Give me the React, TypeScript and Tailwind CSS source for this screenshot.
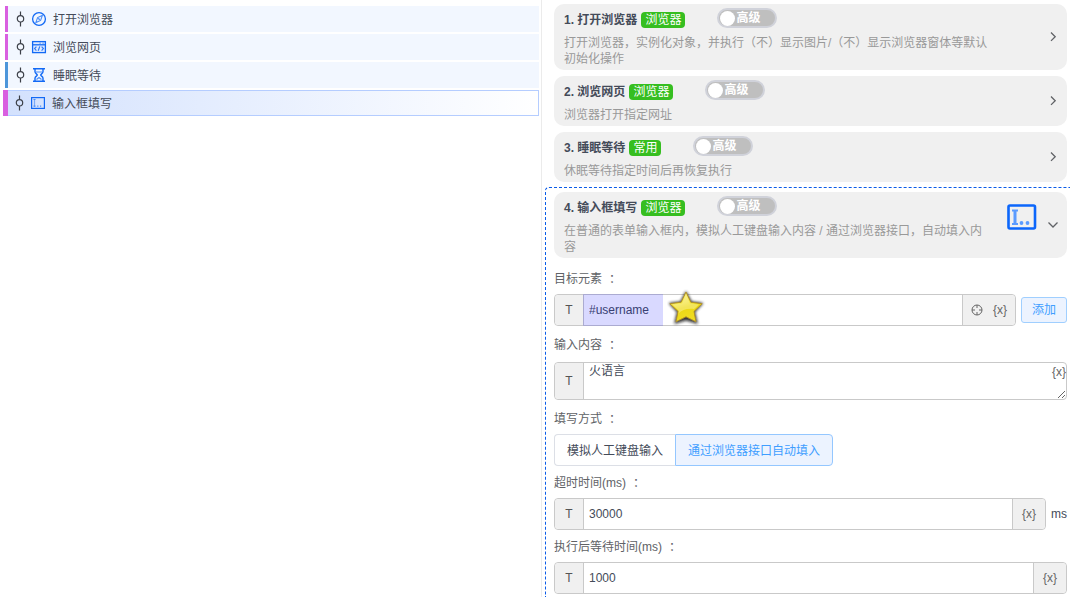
import React from "react";

type StepIcon = "compass" | "page" | "hourglass" | "input";

const steps: { label: string; icon: StepIcon; accent: string; selected?: boolean }[] = [
  { label: "打开浏览器", icon: "compass", accent: "border-[#d95fe0]" },
  { label: "浏览网页", icon: "page", accent: "border-[#d95fe0]" },
  { label: "睡眠等待", icon: "hourglass", accent: "border-[#4d96da]" },
  { label: "输入框填写", icon: "input", accent: "border-[#d95fe0]", selected: true },
];

function NodeMark() {
  return (
    <svg className="h-4 w-2.5 shrink-0" viewBox="0 0 10 16" fill="none" stroke="#3c4048" strokeWidth="1.2">
      <path d="M5.5 .5v4M5.5 11v4.5" />
      <circle cx="5.5" cy="7.8" r="3.2" />
    </svg>
  );
}

function Glyph({ name }: { name: StepIcon }) {
  return (
    <svg className="size-4 shrink-0" viewBox="0 0 16 16" fill="none" stroke="#1269f5" strokeWidth="1.3">
      {name === "compass" && (
        <>
          <circle cx="8" cy="8" r="6.4" />
          <path d="M11.4 4.4 9.6 9.4 4.8 11.6l1.8-5z" stroke="#4a8df8" strokeWidth="1.1" />
          <path d="m7.2 7.2 1.6 1.6" stroke="#4a8df8" />
        </>
      )}
      {name === "page" && (
        <>
          <rect x="1.6" y="2.6" width="12.8" height="11" fill="#dfeaff" />
          <path d="M1.6 5.8h12.8" />
          <path d="M8.5 4.2h1.2M11.5 4.2h1.2" stroke="#4a8df8" />
          <path d="M5.4 7.6 3.6 9.6l1.8 2M10.6 7.6l1.8 2-1.8 2M8.8 7.4l-1.6 4.4" stroke="#2f7bf7" strokeWidth="1.2" />
        </>
      )}
      {name === "hourglass" && (
        <>
          <path d="M2 1.7h12M2 14.3h12" strokeWidth="1.5" />
          <path d="M4 2v2.800C4 6.5 6.300 7 6.300 8S4 9.500 4 11.200V14M12 2v2.800C12 6.500 9.700 7 9.700 8s2.300 1.500 2.300 3.200V14" strokeWidth="1.4" />
          <path d="M5 5h6" stroke="#4a8df8" strokeWidth="1" />
          <path d="m5.500 12.500 2.500-2 2.500 2" stroke="#4a8df8" strokeWidth="1.2" />
        </>
      )}
      {name === "input" && (
        <>
          <rect x="1.6" y="2.6" width="12.8" height="10.8" strokeWidth="1.2" />
          <path d="M4.500 4.500v7" stroke="#7aabf9" strokeWidth="1.2" />
          <path d="M3.500 4.500h2M3.500 11.200h2M7.200 11.200h1.200M10 11.200h1.200" stroke="#4a8df8" strokeWidth="1.2" />
        </>
      )}
    </svg>
  );
}

function InputBoxIcon() {
  return (
    <svg className="mb-4 h-[26px] w-[30px] shrink-0" viewBox="0 0 30 26" fill="none">
      <rect x="1.5" y="1.5" width="26.5" height="23" rx="1.5" stroke="#0b66fb" strokeWidth="2.6" />
      <path d="M5 6.500h6M5 20h6" stroke="#5b9bff" strokeWidth="2" />
      <path d="M8 6v14" stroke="#5b9bff" strokeWidth="3" />
      <circle cx="14.5" cy="19" r="1.9" fill="#5b9bff" />
      <circle cx="20.500" cy="19" r="1.9" fill="#5b9bff" />
    </svg>
  );
}

function Star() {
  return (
    <svg className="h-10 w-10" viewBox="0 0 40 40">
      <defs>
        <linearGradient id="starFill" x1="0" y1="0" x2="0.3" y2="1">
          <stop offset="0" stopColor="#f8f08a" />
          <stop offset="0.45" stopColor="#f2e23a" />
          <stop offset="0.6" stopColor="#ecd814" />
          <stop offset="1" stopColor="#efdc22" />
        </linearGradient>
        <filter id="starShade" x="-30%" y="-30%" width="160%" height="160%">
          <feGaussianBlur stdDeviation="1.8" />
        </filter>
      </defs>
      <path d="M19 2l5.500 10.500 12 1.500-8.500 9 2.800 12L19 31.500 7.200 35l2.800-12L1.500 14l12-1.500z" fill="#111" opacity="0.85" filter="url(#starShade)" />
      <path d="M19 3l4.900 10.200 11.300 1.500-8.200 7.700 2 10.400-10-5-10 5 2-10.400-8.200-7.700 11.300-1.500z" fill="url(#starFill)" stroke="#b0902a" strokeWidth="1" strokeLinejoin="round" />
      <path d="M19 5.500l4 8.700 9 1.200-5 4.600c-7-1-12 1-15.500 4.500l.500-2.500-6.500-6.600 9.500-1.200z" fill="#fffde0" opacity="0.35" />
    </svg>
  );
}

function CardHeader({ no, title, tag, desc, open }: { no: number; title: string; tag: string; desc: string; open?: boolean }) {
  return (
    <section className="flex rounded-[10px] bg-[#f0f0f0] pb-[3px] pl-2.5">
      <div className="min-w-0 flex-1">
        <div className="flex h-[31px] items-center">
          <h2 className="pt-px font-bold text-[#444b59]">{no}. {title}</h2>
          <span className="ml-1 rounded bg-[#36be20] px-1 leading-4 text-white">{tag}</span>
          <button type="button" role="switch" aria-checked="false" className="mb-[3px] ml-8 flex h-5 items-center gap-px rounded-full border-2 border-[#d0d2da] bg-[#bfbfbf] pl-px pr-[15px] font-bold leading-4 text-white">
            <span className="size-[15px] rounded-full bg-white" />
            高级
          </button>
        </div>
        <p className="leading-4 text-[#999]">{desc}</p>
      </div>
      <button type="button" aria-label={title} aria-expanded={!!open} className="-mb-[3px] flex w-[77px] shrink-0 items-center justify-end gap-2.5 pr-2">
        {open && <InputBoxIcon />}
        <svg className="size-3 shrink-0" viewBox="0 0 12 12" fill="none" stroke="#606266" strokeWidth="1.3">
          {open ? <path d="M1.500 3.500 6 8l4.500-4.500" /> : <path d="M4 1.500 8.200 5.700 4 9.900" />}
        </svg>
      </button>
    </section>
  );
}

function Colon() {
  return <span className="font-['Noto_Sans_CJK_TC',sans-serif]">：</span>;
}

function FieldLabel({ htmlFor, children }: { htmlFor: string; children: React.ReactNode }) {
  return (
    <label htmlFor={htmlFor} className="flex h-8 items-center gap-1 pt-0.5 text-[#606266]">
      {children}
      <Colon />
    </label>
  );
}

const group = "flex min-w-0 flex-1 rounded border border-[#c9c9c9]";
const typeBox = "w-[29px] shrink-0 rounded-l border-r border-[#c9c9c9] bg-[#f0f0f0] text-[#555]";
const varBox = "w-[33px] shrink-0 rounded-r border-l border-[#c9c9c9] bg-[#f0f0f0] text-[#666]";
const textInput = "min-w-0 flex-1 px-[5px] outline-none";

export default function App() {
  return (
    <div className="grid min-h-screen grid-cols-[542fr_528fr] bg-white font-['Liberation_Sans','Noto_Sans_CJK_SC',sans-serif] text-xs text-[#444b59]">
      <nav className="flex flex-col gap-0.5 border-r border-[#ebebeb] pl-[5px] pr-0.5 pt-1.5">
        {steps.map((s) => (
          <a
            key={s.label}
            href="#"
            className={
              s.selected
                ? "-ml-0.5 flex h-[26px] border border-l-0 border-[#b5cdff] bg-linear-to-r from-[#d3e1fd] to-white"
                : "flex h-[26px] bg-[#f2f7ff]"
            }
          >
            <span className={`${s.accent} ${s.selected ? "-my-px border-l-[5px] pl-1.5" : "border-l-[3px] pl-[7px]"} flex items-center`}>
              <NodeMark />
              <span className="ml-1.5 flex items-center gap-1.5">
                <Glyph name={s.icon} />
                <span className="pt-0.5">{s.label}</span>
              </span>
            </span>
          </a>
        ))}
      </nav>

      <main className="flex min-w-0 flex-col pl-[3px] pt-1">
        <div className="flex flex-col gap-1.5 pl-[9px] pr-[3px]">
          <CardHeader no={1} title="打开浏览器" tag="浏览器" desc="打开浏览器，实例化对象，并执行（不）显示图片/（不）显示浏览器窗体等默认初始化操作" />
          <CardHeader no={2} title="浏览网页" tag="浏览器" desc="浏览器打开指定网址" />
          <CardHeader no={3} title="睡眠等待" tag="常用" desc="休眠等待指定时间后再恢复执行" />
        </div>

        <form className="mt-[5px] flex-1 rounded-tl border-l border-t border-dashed border-[#0a5be8] pl-2 pr-[3px] pt-1">
          <CardHeader no={4} title="输入框填写" tag="浏览器" desc="在普通的表单输入框内，模拟人工键盘输入内容 / 通过浏览器接口，自动填入内容" open />

          <div className="mt-1">
            <FieldLabel htmlFor="target">目标元素</FieldLabel>
            <div className="mb-0.5 flex h-8 items-center gap-[5px]">
              <div className={`${group} relative h-full`}>
                <button type="button" className={typeBox}>T</button>
                <input id="target" defaultValue="#username" className={textInput} />
                <span className="pointer-events-none absolute -inset-y-px left-7 w-20 bg-[#0000ff]/15" />
                <span className="pointer-events-none absolute -top-1.5 left-28"><Star /></span>
                <div className="flex w-[53px] shrink-0 items-center justify-between rounded-r border-l border-[#c9c9c9] bg-[#f0f0f0] px-2 text-[#666]">
                  <button type="button" aria-label="定位">
                    <svg className="block size-3" viewBox="0 0 12 12" fill="none" stroke="#666" strokeWidth="1">
                      <circle cx="6" cy="6" r="5" />
                      <path d="M6 1v3M6 8v3M1 6h3M8 6h3" />
                    </svg>
                  </button>
                  <button type="button">{"{x}"}</button>
                </div>
              </div>
              <button type="button" className="h-[26px] w-[46px] rounded-[3px] border border-[#a0cfff] bg-[#ecf3ff] text-[#409eff]">添加</button>
            </div>
          </div>

          <div>
            <FieldLabel htmlFor="content">输入内容</FieldLabel>
            <div className={`${group} relative my-0.5`}>
              <button type="button" className={typeBox}>T</button>
              <textarea id="content" defaultValue="火语言" className="h-9 min-w-0 flex-1 resize-y overflow-hidden px-[5px] leading-4 outline-none" />
              <button type="button" className="absolute right-0 top-px text-[#666]">{"{x}"}</button>
            </div>
          </div>

          <fieldset>
            <legend className="flex h-8 items-center gap-1 pt-0.5 text-[#606266]">
              填写方式
              <Colon />
            </legend>
            <div className="flex h-8">
              <button type="button" className="rounded-l border border-r-0 border-[#dcdfe6] px-3 pt-0.5">模拟人工键盘输入</button>
              <button type="button" className="rounded-r border border-[#94c7ff] bg-[#ecf3ff] px-3 pt-0.5 text-[#409eff]">通过浏览器接口自动填入</button>
            </div>
          </fieldset>

          <FieldLabel htmlFor="timeout">超时时间(ms)</FieldLabel>
          <div className="flex h-8 items-center gap-[5px]">
            <div className={`${group} h-full`}>
              <button type="button" className={typeBox}>T</button>
              <input id="timeout" defaultValue="30000" className={textInput} />
              <button type="button" className={varBox}>{"{x}"}</button>
            </div>
            <span>ms</span>
          </div>

          <FieldLabel htmlFor="delay">执行后等待时间(ms)</FieldLabel>
          <div className={`${group} h-8`}>
            <button type="button" className={typeBox}>T</button>
            <input id="delay" defaultValue="1000" className={textInput} />
            <button type="button" className={varBox}>{"{x}"}</button>
          </div>
        </form>
      </main>
    </div>
  );
}
